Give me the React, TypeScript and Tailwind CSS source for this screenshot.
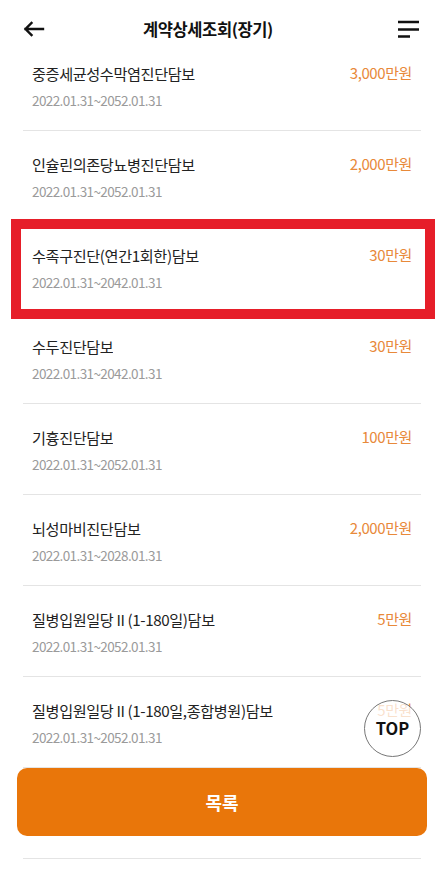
import React from 'react';

type Coverage = {
  name: string;
  amount: string;
  period: string;
};

const coverages: Coverage[] = [
  { name: '중증세균성수막염진단담보', amount: '3,000만원', period: '2022.01.31~2052.01.31' },
  { name: '인슐린의존당뇨병진단담보', amount: '2,000만원', period: '2022.01.31~2052.01.31' },
  { name: '수족구진단(연간1회한)담보', amount: '30만원', period: '2022.01.31~2042.01.31' },
  { name: '수두진단담보', amount: '30만원', period: '2022.01.31~2042.01.31' },
  { name: '기흉진단담보', amount: '100만원', period: '2022.01.31~2052.01.31' },
  { name: '뇌성마비진단담보', amount: '2,000만원', period: '2022.01.31~2028.01.31' },
  { name: '질병입원일당 II (1-180일)담보', amount: '5만원', period: '2022.01.31~2052.01.31' },
  { name: '질병입원일당 II (1-180일,종합병원)담보', amount: '5만원', period: '2022.01.31~2052.01.31' },
  { name: '질병입원일당 II (1-180일,상급병원)담보', amount: '5만원', period: '2022.01.31~2052.01.31' },
];

const HIGHLIGHT_INDEX = 2;
// the last row sits behind the floating 목록 button, only its divider shows
const HIDDEN_INDEX = coverages.length - 1;

function BackIcon() {
  return (
    <svg width="22" height="16" viewBox="0 0 22 16" fill="none" aria-hidden="true">
      <path d="M20 8H2.5M8.5 2L2.5 8l6 6" stroke="#111" strokeWidth="2.4" strokeLinecap="square" />
    </svg>
  );
}

function MenuIcon() {
  return (
    <svg width="22" height="18" viewBox="0 0 22 18" fill="none" aria-hidden="true">
      <path d="M0 2h21M0 9.5h21M0 16.5h12" stroke="#111" strokeWidth="2.3" />
    </svg>
  );
}

function CoverageRow({
  item,
  first,
  highlighted,
  hidden,
}: {
  item: Coverage;
  first: boolean;
  highlighted: boolean;
  hidden: boolean;
}) {
  return (
    <li
      className={
        'relative mx-[23px] border-b border-[#e4e4e4] px-[9px] pb-[21px] ' + (first ? 'pt-[5px]' : 'pt-[23px]')
      }
    >
      <div className={hidden ? 'invisible' : ''}>
        <div className="flex items-center justify-between gap-3">
          <p className="truncate text-[15.2px] leading-[20px] tracking-[-0.4px] text-[#222]">{item.name}</p>
          <p className="shrink-0 text-[15px] leading-[20px] tracking-[-0.4px] text-[#e8893a]">{item.amount}</p>
        </div>
        <p className="mt-[8px] text-[13.5px] leading-[18px] tracking-[-0.6px] text-[#9a9a9a]">{item.period}</p>
      </div>
      {highlighted && (
        <div className="pointer-events-none absolute -top-[3px] -right-[14px] -bottom-[7px] -left-[12px] border-[10px] border-[#e61e29]" />
      )}
    </li>
  );
}

export default function App() {
  return (
    <div
      className="relative h-[869px] w-[444px] overflow-hidden bg-white"
      style={{ fontFamily: '"Noto Sans CJK KR", "Noto Sans", sans-serif' }}
    >
      <header className="flex h-[58px] items-center bg-white px-[23px]">
        <button type="button" className="flex h-8 w-8 items-center">
          <BackIcon />
        </button>
        <h1 className="ml-[88px] text-[16.5px] font-bold tracking-[-0.4px] text-[#111]">계약상세조회(장기)</h1>
        <button type="button" className="ml-auto flex h-8 w-8 items-center justify-end pr-[1px]">
          <MenuIcon />
        </button>
      </header>

      <ul>
        {coverages.map((item, index) => (
          <CoverageRow
            key={item.name}
            item={item}
            first={index === 0}
            highlighted={index === HIGHLIGHT_INDEX}
            hidden={index === HIDDEN_INDEX}
          />
        ))}
      </ul>

      <button
        type="button"
        className="absolute top-[700px] left-[364px] flex h-[57px] w-[57px] items-center justify-center rounded-full border border-[#777] bg-white/75 text-[16.5px] font-bold text-[#111]"
      >
        TOP
      </button>

      <button
        type="button"
        className="absolute top-[768px] right-[17px] left-[17px] flex h-[68px] items-center justify-center rounded-[10px] bg-[#e9760a] text-[18px] font-bold text-white"
      >
        목록
      </button>
    </div>
  );
}
